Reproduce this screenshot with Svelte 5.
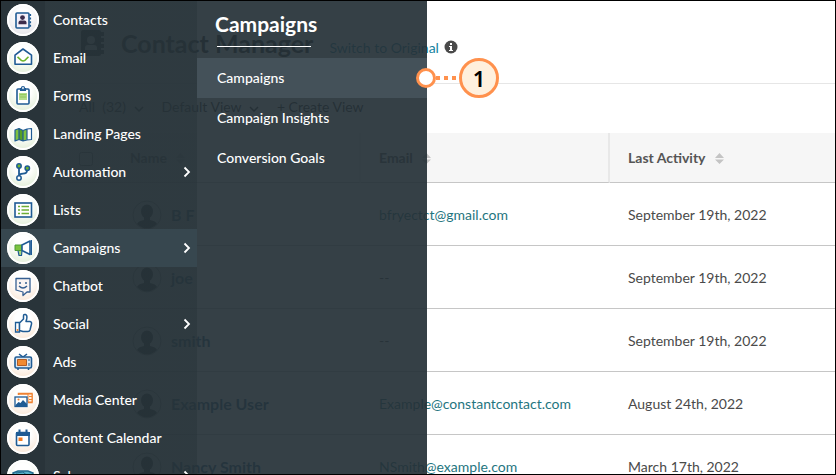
<script lang="ts">
    type MenuItem = {
        label: string;
        tone: "gray" | "green" | "peach";
        more?: boolean;
        icon: string;
    };

    const menu: MenuItem[] = [
        {
            label: "Contacts",
            tone: "gray",
            icon: `<rect x="9" y="9" width="13" height="15" rx="1" fill="#f4f0fa" stroke="#1f5b94" stroke-width="1.6"/><path d="M23.3 10v13" stroke="#1f5b94" stroke-width="1.6" stroke-dasharray="2 1.6"/><circle cx="15.5" cy="13.6" r="2.4" fill="#3c2c4c"/><path d="M11.5 20.2v-1.6q0-2 2-2h4q2 0 2 2v1.6z" fill="#3c2c4c"/>`,
        },
        {
            label: "Email",
            tone: "green",
            icon: `<path d="M8 13.2l8-6.2 8.5 6.2v9H8z" fill="#fff" stroke="#1f5b94" stroke-width="1.6" stroke-linejoin="round"/><path d="M10.5 14.8l3.8 3.6q1.8 1.2 3.6 0l3.6-3.6" stroke="#6db52c" stroke-width="1.6"/>`,
        },
        {
            label: "Forms",
            tone: "green",
            icon: `<rect x="10" y="9" width="12" height="15" rx="1" fill="#fff" stroke="#1f5b94" stroke-width="1.6"/><path d="M12 13h8v7h-8z" fill="#b5dc8d"/><path d="M12.8 14.7h6.5M12.8 17h6.5" stroke="#8ec756"/><path d="M13 8h6v3h-6z" fill="#1f5b94"/><circle cx="16" cy="8" r="1.5" fill="#fff" stroke="#1f5b94" stroke-width="1.2"/>`,
        },
        {
            label: "Landing Pages",
            tone: "green",
            icon: `<path d="M8 12l4-1.5v11L8 23zM16 12.5l4-1.5v10.5l-4 1.5z" fill="#7ec13f"/><path d="M12 10.5l4 2v10.5l-4-1.5z" fill="#549e25"/><path d="M20 11l4.5-.5v11L20 22z" fill="#fff"/><path d="M8 12l4-1.5 4 2 4-1.5 4.5-.5v11L20 22l-4 1-4-1.5L8 23zM12 10.5v11M16 12.5V23M20 11v11" stroke="#1f5b94" stroke-width="1.2" stroke-linejoin="round"/>`,
        },
        {
            label: "Automation",
            tone: "green",
            more: true,
            icon: `<path d="M12 12v8M20 14.500q0 3-4 3.200-4 .3-4 2.300" stroke="#1f5b94" stroke-width="1.8"/><circle cx="12" cy="10" r="2.2" fill="#6db52c" stroke="#1f5b94" stroke-width="1.5"/><circle cx="20.3" cy="12.3" r="2.2" fill="#6db52c" stroke="#1f5b94" stroke-width="1.5"/><circle cx="12" cy="22" r="2.2" fill="#fff" stroke="#1f5b94" stroke-width="1.5"/>`,
        },
        {
            label: "Lists",
            tone: "green",
            icon: `<rect x="8" y="9" width="16.5" height="14" fill="#fff" stroke="#1f5b94" stroke-width="1.6"/><path d="M11 12.500h2M11 16h2M11 19.500h2M14.500 12.500H22M14.500 16H22M14.500 19.500H22" stroke="#6eae36" stroke-width="1.6"/>`,
        },
        {
            label: "Campaigns",
            tone: "green",
            more: true,
            icon: `<path d="M11 18.5h4l-.5 5h-2.5z" fill="#a6d87a" stroke="#1f5b94" stroke-width="1.2"/><path d="M8 13h7v5.5H8z" fill="#7bc33e" stroke="#4b9a37"/><path d="M15 13l8-4v13.5l-8-4z" fill="#fff" stroke="#1f5b94" stroke-width="1.6" stroke-linejoin="round"/><path d="M24.3 8v15" stroke="#1f5b94" stroke-width="1.4"/>`,
        },
        {
            label: "Chatbot",
            tone: "peach",
            icon: `<path d="M9 8.5h14V22h-3l-4 3.500V22l-7-2z" fill="#fbf5f3" stroke="#365f91" stroke-width="1.3" stroke-linejoin="round"/><circle cx="13" cy="13" r="1" fill="#365f91"/><circle cx="19" cy="13" r="1" fill="#365f91"/><path d="M12 16q4 4 8 0" stroke="#365f91" stroke-width="1.3"/>`,
        },
        {
            label: "Social",
            tone: "peach",
            more: true,
            icon: `<path d="M8.5 14.5h4V24h-4z" fill="#fff" stroke="#1f5b94" stroke-width="1.3"/><circle cx="10.5" cy="22" r="1" fill="#f47b20"/><path d="M12.5 15l4-4V8q0-2 2-1.5 2 .6 1.2 4.5l-.7 2.5H23q2 .4 1.500 2.500L23 22q-.5 1.5-2 1.5h-5l-3.500-1z" fill="#fff" stroke="#1f5b94" stroke-width="1.5" stroke-linejoin="round"/>`,
        },
        {
            label: "Ads",
            tone: "peach",
            icon: `<path d="M12 8l4 3 4-3M11 22v2M21.500 22v2" stroke="#1f5b94" stroke-width="1.5"/><rect x="8" y="11" width="16.5" height="11" rx="1.5" fill="#d9e5ef" stroke="#1f5b94" stroke-width="1.6"/><path d="M10.5 13.5h9v6h-9z" fill="#f18a32" stroke="#b35c23"/><path d="M22 13v2M22 17v3" stroke="#1f5b94"/>`,
        },
        {
            label: "Media Center",
            tone: "peach",
            icon: `<path d="M11.5 11v-1.5H25v9h-4M12 10h13" stroke="#f08232" stroke-width="1.5"/><path d="M21 10h4v8h-4z" fill="#fff0df" stroke="#f08232"/><path d="M22 12.5h3M22 15.5h3" stroke="#f08232"/><rect x="8" y="13" width="12" height="9.5" fill="#fff" stroke="#1f5b94" stroke-width="1.3"/><path d="M8.5 21l3-3 2 1 2.500-3 4 4v2.500H8.500z" fill="#1f5b94"/><circle cx="11.5" cy="15.5" r="1" fill="#f08232"/>`,
        },
        {
            label: "Content Calendar",
            tone: "peach",
            icon: `<rect x="9.5" y="10.5" width="12.5" height="13" rx="1" fill="#fff" stroke="#1f5b94" stroke-width="1.6"/><path d="M9 10h14v4H9zM11.500 7.500h2V11h-2zM18.500 7.500h2V11h-2z" fill="#1f5b94"/><path d="M11.500 15.500h4v3.500h-4z" fill="#f47b20"/>`,
        },
        {
            label: "Sales",
            tone: "green",
            more: true,
            icon: `<path d="M6 13l5-2h10l5 2-1 8-5 4h-8l-5-4z" fill="#55b1c8" stroke="#236b8f" stroke-width="1.5"/><path d="M9 13l7-1 7 6" stroke="#236b8f"/>`,
        },
    ];

    const submenu = ["Campaigns", "Campaign Insights", "Conversion Goals"];

    const contacts = [
        { name: "B F", email: "bfryectct@gmail.com", date: "September 19th, 2022" },
        { name: "joe", email: "", date: "September 19th, 2022" },
        { name: "smith", email: "", date: "September 19th, 2022" },
        { name: "Example User", email: "Example@constantcontact.com", date: "August 24th, 2022" },
        { name: "Nancy Smith", email: "NSmith@example.com", date: "March 17th, 2022" },
    ];

    let active = $state("Campaigns");
    let activeSub = $state("Campaigns");
</script>

{#snippet chevron()}
    <svg class="chevron" width="10" height="6" viewBox="0 0 10 6" fill="none" aria-hidden="true">
        <path d="M1 1l4 4 4-4" stroke="currentColor" stroke-width="1.5" />
    </svg>
{/snippet}

{#snippet sorter()}
    <svg class="sorter" width="9" height="11" viewBox="0 0 9 11" aria-hidden="true">
        <path d="M0 5l4.5-5L9 5zM0 6.5h9L4.500 11z" fill="#c4c4c4" />
    </svg>
{/snippet}

<div class="app">
    <main class="page">
        <header class="page-header">
            <svg width="24" height="26" viewBox="0 0 24 26" aria-hidden="true">
                <rect width="20" height="26" rx="2" fill="#222" />
                <path d="M21.500 2v22" stroke="#222" stroke-width="3" stroke-dasharray="4 2" />
                <circle cx="10" cy="10" r="4" fill="#fff" />
                <path d="M4 20v-2q0-3 3-3h6q3 0 3 3v2z" fill="#fff" />
            </svg>
            <h1>Contact Manager</h1>
            <a href="#original">Switch to Original</a>
            <svg class="info" width="14" height="14" viewBox="0 0 14 14" role="img" aria-label="Info">
                <circle cx="7" cy="7" r="6.5" fill="#4a4a4a" />
                <path d="M6 3h2v2H6zM5 6h3v4h1v1H5v-1h1V7H5z" fill="#fff" />
            </svg>
        </header>

        <div class="toolbar">
            <button>All &nbsp;(32) {@render chevron()}</button>
            <button>Default View {@render chevron()}</button>
            <button>+ Create View</button>
        </div>

        <table>
            <thead>
                <tr>
                    <th class="check"><input type="checkbox" aria-label="Select all" /></th>
                    <th class="name">Name {@render sorter()}</th>
                    <th class="email">Email {@render sorter()}</th>
                    <th>Last Activity {@render sorter()}</th>
                </tr>
            </thead>
            <tbody>
                {#each contacts as contact}
                    <tr>
                        <td colspan="2">
                            <div class="person">
                                <svg width="30" height="30" viewBox="0 0 30 30" aria-hidden="true">
                                    <circle cx="15" cy="15" r="14" fill="#fff" stroke="#999" />
                                    <ellipse cx="15" cy="11.5" rx="6" ry="7" fill="#222" />
                                    <path d="M5 24q1-3 7-4v-4h6v4q6 1 7 4-10 9-20 0z" fill="#222" />
                                </svg>
                                <strong>{contact.name}</strong>
                            </div>
                        </td>
                        <td>
                            {#if contact.email}
                                <a href="mailto:{contact.email}">{contact.email}</a>
                            {:else}
                                --
                            {/if}
                        </td>
                        <td>{contact.date}</td>
                    </tr>
                {/each}
            </tbody>
        </table>
    </main>

    <div class="overlay">
        <nav class="sidebar" aria-label="Main">
            {#each menu as item}
                <button
                    class="menu-item"
                    class:active={active === item.label}
                    onclick={() => (active = item.label)}
                >
                    <span class="badge {item.tone}">
                        <svg width="32" height="32" viewBox="0 0 32 32" fill="none" aria-hidden="true">
                            {@html item.icon}
                        </svg>
                    </span>
                    <span class="menu-label">{item.label}</span>
                    {#if item.more}
                        <svg width="8" height="12" viewBox="0 0 8 12" fill="none" aria-hidden="true">
                            <path d="M1.5 1.5L6 6l-4.5 4.5" stroke="#fff" stroke-width="1.8" />
                        </svg>
                    {/if}
                </button>
            {/each}
        </nav>

        <nav class="flyout" aria-label="Campaigns">
            <h2>Campaigns</h2>
            {#each submenu as label, i}
                <button
                    class="sub-item"
                    class:active={activeSub === label}
                    onclick={() => (activeSub = label)}
                >
                    {label}
                    {#if i === 0}
                        <span class="callout">
                            <span class="anchor"></span>
                            <span class="dots"></span>
                            <span class="step">1</span>
                        </span>
                    {/if}
                </button>
            {/each}
        </nav>
    </div>
</div>

<style>
    :global(body) {
        margin: 0;
        background: #fff;
    }

    .app {
        position: relative;
        box-sizing: border-box;
        height: 100vh;
        border: 1px solid #000;
        overflow: hidden;
        color: #4a4a4a;
        font: 14px/20px Lato, sans-serif;
    }

    button {
        border: 0;
        padding: 0;
        background: none;
        color: inherit;
        font: inherit;
        text-align: left;
        cursor: pointer;
    }

    a {
        color: #1f7580;
        text-decoration: none;
    }

    .page {
        padding-left: 60px;
    }

    .page-header {
        display: flex;
        align-items: center;
        box-sizing: border-box;
        height: 83px;
        padding: 2px 20px 0;
        border-bottom: 1px solid #e6e6e6;
    }

    h1 {
        margin: 0 16px;
        color: #222;
        font-size: 25px;
        line-height: 32px;
    }

    .page-header a {
        padding-top: 10px;
        color: #1482a0;
    }

    .info {
        margin: 8px 0 0 5px;
    }

    .toolbar {
        display: flex;
        align-items: center;
        gap: 18px;
        box-sizing: border-box;
        height: 49px;
        padding: 0 0 4px 18px;
        color: #222;
    }

    .chevron {
        margin-left: 4px;
    }

    table {
        width: 100%;
        border-collapse: separate;
        border-spacing: 0;
        table-layout: fixed;
    }

    th,
    td {
        box-sizing: border-box;
        padding: 0 0 0 18px;
        border-bottom: 1px solid #c6c6c6;
        text-align: left;
    }

    th {
        height: 50px;
        border-right: 2px solid #e8e8e8;
        background: #f6f6f6;
        color: #555;
    }

    th:last-child {
        border-right: 0;
    }

    td {
        height: 63px;
        padding-top: 2px;
    }

    th.check {
        width: 51px;
        border-right: 0;
    }

    .name,
    .email {
        width: 249px;
    }

    input {
        width: 14px;
        height: 14px;
        margin: 0;
        vertical-align: middle;
    }

    .sorter {
        margin-left: 6px;
        vertical-align: -1px;
    }

    .person {
        display: flex;
        align-items: center;
        gap: 9px;
        padding-left: 53px;
        color: #1f5b80;
        font-size: 16px;
    }

    /* menus lie over the page and let it show through faintly */
    .overlay {
        position: absolute;
        top: 0;
        bottom: 0;
        left: 0;
        display: flex;
        color: #fff;
        font-weight: 500;
    }

    .sidebar {
        width: 196px;
        background: linear-gradient(90deg, #29343a 44px, rgba(38, 50, 56, 0.96) 44px);
    }

    .menu-item {
        display: flex;
        align-items: center;
        box-sizing: border-box;
        width: 100%;
        height: 38px;
        padding: 0 6px;
    }

    .menu-item.active {
        background: #37474f;
    }

    .badge {
        display: block;
        width: 32px;
        height: 32px;
        border-radius: 50%;
        box-shadow: inset 0 0 0 2px #fff;
    }

    .badge svg {
        display: block;
    }

    .badge.gray {
        background: radial-gradient(circle at 50% 35%, #fff 25%, #e2e0e6 85%);
    }

    .badge.green {
        background: radial-gradient(circle at 50% 35%, #fff 30%, #dcebcf 90%);
    }

    .badge.peach {
        background: radial-gradient(circle at 50% 35%, #fff 30%, #f9e2ce 90%);
    }

    .menu-label {
        flex: 1;
        margin-left: 14px;
    }

    .flyout {
        width: 230px;
        background: rgba(38, 50, 56, 0.93);
    }

    h2 {
        margin: 9px 0 11px 18px;
        font-size: 21px;
        line-height: 28px;
    }

    h2::after {
        content: "";
        display: block;
        width: 94px;
        height: 1px;
        margin: 8px 0 0 2px;
        background: #fff;
    }

    .sub-item {
        position: relative;
        display: block;
        width: 100%;
        height: 40px;
        padding-left: 20px;
    }

    .sub-item.active {
        background: #445159;
    }

    .callout {
        position: absolute;
        top: 0;
        left: 219px;
        display: flex;
        align-items: center;
        height: 40px;
    }

    .anchor,
    .step {
        box-sizing: border-box;
        border: 3px solid #ff914d;
        border-radius: 50%;
    }

    .anchor {
        width: 20px;
        height: 20px;
        background: #fff;
    }

    .dots {
        width: 23px;
        height: 4px;
        background: repeating-linear-gradient(90deg, #ff914d 0 4px, transparent 4px 8px);
    }

    .step {
        width: 40px;
        height: 40px;
        background: #fff0dd;
        color: #000;
        font: 600 22px/34px "Noto Sans", sans-serif;
        text-align: center;
    }
</style>
